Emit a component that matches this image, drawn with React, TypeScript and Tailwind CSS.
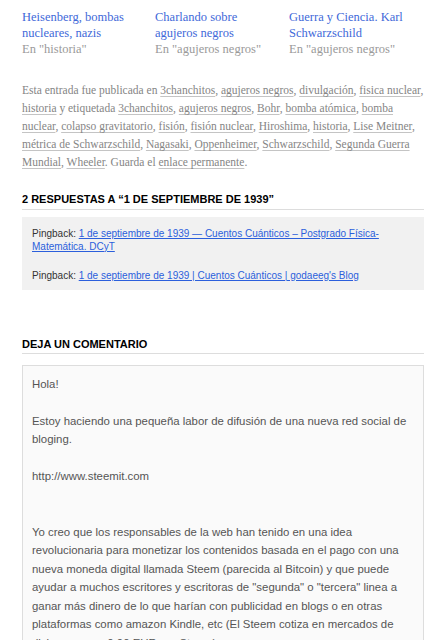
const related = [
  { title: "Heisenberg, bombas nucleares, nazis", cat: "En \"historia\"" },
  { title: "Charlando sobre agujeros negros", cat: "En \"agujeros negros\"" },
  { title: "Guerra y Ciencia. Karl Schwarzschild", cat: "En \"agujeros negros\"" },
];

const cats = ["3chanchitos", "agujeros negros", "divulgación", "fisica nuclear", "historia"];
const tags = [
  "3chanchitos",
  "agujeros negros",
  "Bohr",
  "bomba atómica",
  "bomba nuclear",
  "colapso gravitatorio",
  "fisión",
  "fisión nuclear",
  "Hiroshima",
  "historia",
  "Lise Meitner",
  "métrica de Schwarzschild",
  "Nagasaki",
  "Oppenheimer",
  "Schwarzschild",
  "Segunda Guerra Mundial",
  "Wheeler",
];

const comment = `Hola!

Estoy haciendo una pequeña labor de difusión de una nueva red social de bloging.

http://www.steemit.com


Yo creo que los responsables de la web han tenido en una idea revolucionaria para monetizar los contenidos basada en el pago con una nueva moneda digital llamada Steem (parecida al Bitcoin) y que puede ayudar a muchos escritores y escritoras de "segunda" o "tercera" linea a ganar más dinero de lo que harían con publicidad en blogs o en otras plataformas como amazon Kindle, etc (El Steem cotiza en mercados de divisas a unos 0,90 EUR por Steem).

Saludos!`;

function LinkList({ items }: { items: string[] }) {
  return (
    <>
      {items.map((t, i) => (
        <span key={t + i}>
          <a href="#" className="underline decoration-[#c4c4c4] underline-offset-2">
            {t}
          </a>
          {i < items.length - 1 ? ", " : ""}
        </span>
      ))}
    </>
  );
}

export default function App() {
  return (
    <div className="min-h-screen w-[446px] bg-white px-[22px] pt-[9px] pb-10">
      <div className="grid grid-cols-[133px_134px_1fr] font-['Liberation_Serif',serif] text-[12.5px] leading-[16px]">
        {related.map((r) => (
          <div key={r.title} className="pr-2">
            <a href="#" className="text-[#4169d9]">
              {r.title}
            </a>
            <div className="text-[#9a9a9a]">{r.cat}</div>
          </div>
        ))}
      </div>

      <p className="mt-[24px] font-['Liberation_Serif',serif] text-[11.5px] leading-[18px] text-[#858585]">
        Esta entrada fue publicada en <LinkList items={cats} /> y etiquetada <LinkList items={tags} />. Guarda el{" "}
        <a href="#" className="underline decoration-[#c4c4c4] underline-offset-2">
          enlace permanente
        </a>
        .
      </p>

      <h3 className="mt-[20px] border-b border-[#ddd] pb-[1px] font-['Liberation_Sans',sans-serif] text-[11px] font-bold uppercase text-black">
        2 respuestas a “1 de septiembre de 1939”
      </h3>

      <div className="mt-[7px] bg-[#f1f1f1] px-[10px] pt-[10px] pb-[8px] font-['Liberation_Sans',sans-serif] text-[10px] leading-[13px] text-[#333]">
        <p>
          Pingback:{" "}
          <a href="#" className="text-[#2b5fdc] underline">
            1 de septiembre de 1939 — Cuentos Cuánticos – Postgrado Física-Matemática. DCyT
          </a>
        </p>
        <p className="mt-[16px]">
          Pingback:{" "}
          <a href="#" className="text-[#2b5fdc] underline">
            1 de septiembre de 1939 | Cuentos Cuánticos | godaeeg's Blog
          </a>
        </p>
      </div>

      <h3 className="mt-[46px] border-b border-[#ddd] pb-[1px] font-['Liberation_Sans',sans-serif] text-[11px] font-bold uppercase text-black">
        Deja un comentario
      </h3>

      <div className="mt-[11px] h-[320px] overflow-hidden border border-[#ddd] bg-[#fafafa] px-[9px] pt-[8.5px] font-['Liberation_Sans',sans-serif] text-[11.4px] leading-[18.5px] text-[#555] whitespace-pre-wrap">
        {comment}
      </div>
    </div>
  );
}
